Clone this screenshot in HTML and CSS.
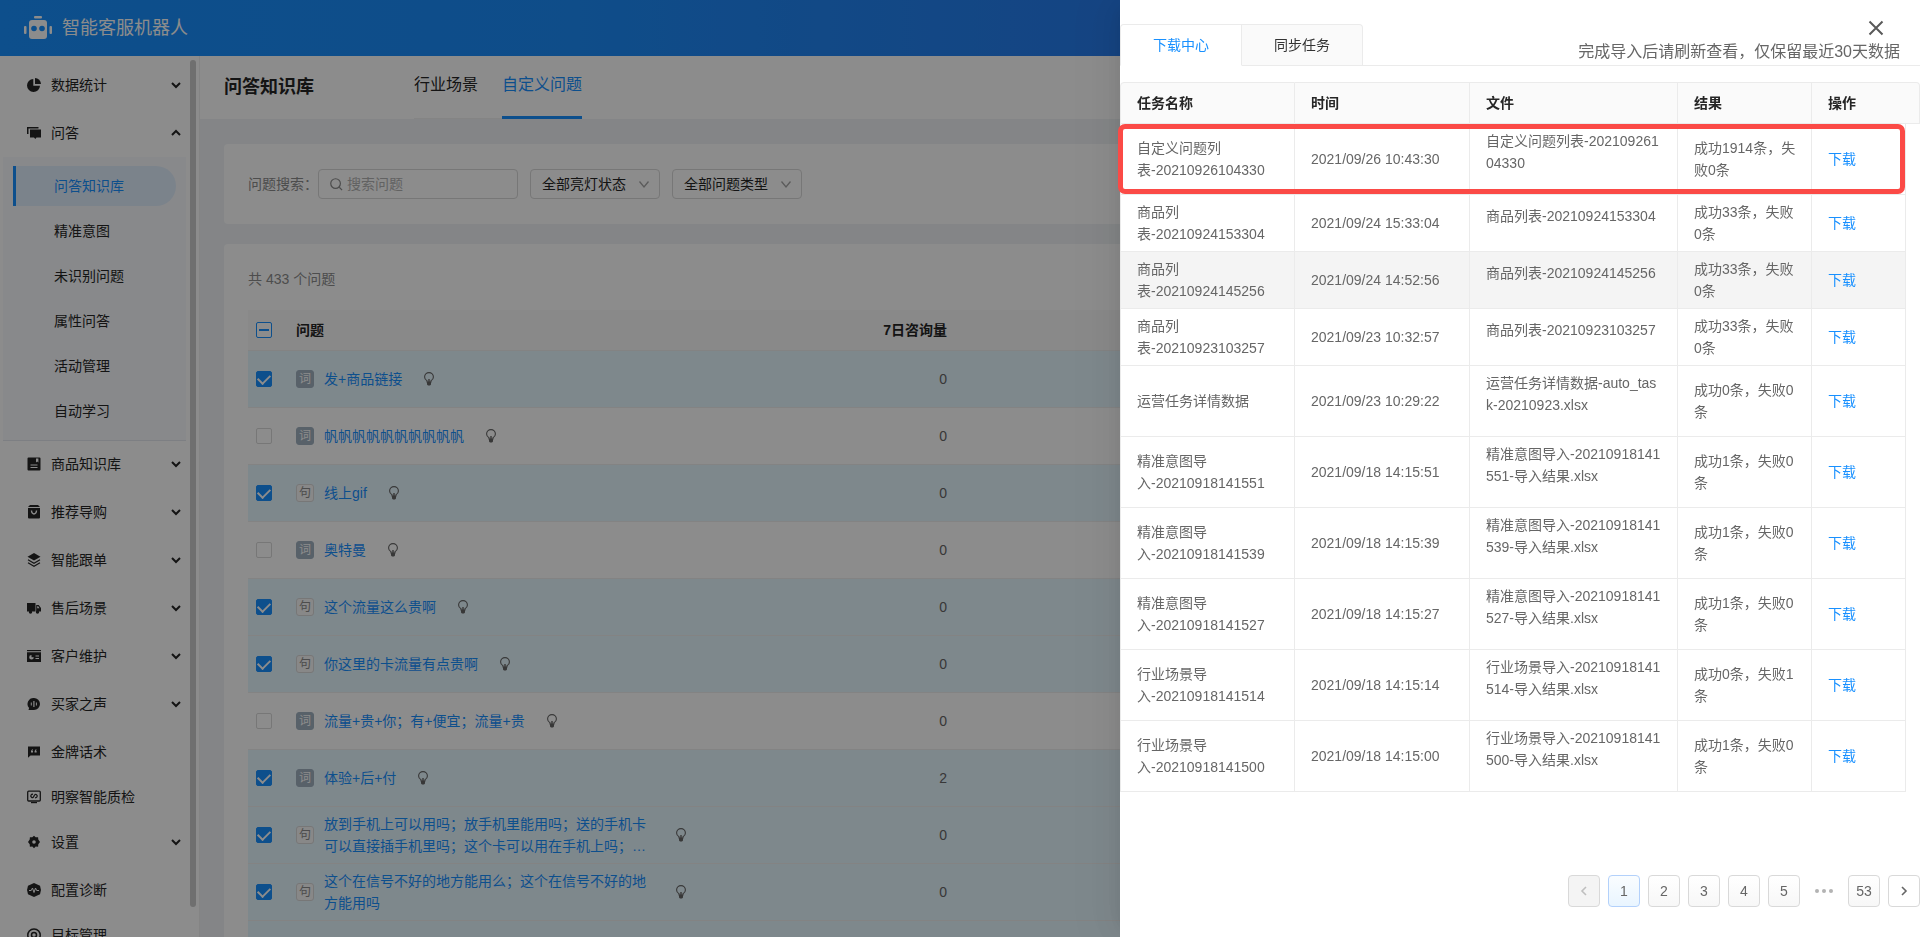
FILE: index.html
```html
<!DOCTYPE html>
<html lang="zh-CN">
<head>
<meta charset="utf-8">
<title>智能客服机器人</title>
<link rel="stylesheet" href="styles.css">
</head>
<body>
<svg class="sprite" aria-hidden="true">
  <symbol id="chevron" viewBox="0 0 10 8"><path d="M1 2l4 4 4-4" fill="none" stroke="currentColor" stroke-width="2"/></symbol>
  <symbol id="bulb" viewBox="0 0 12 14"><path d="M4 10V8.800C2.500 8 1.600 6.700 1.600 5a4.400 4.400 0 0 1 8.800 0c0 1.700-.9 3-2.400 3.800V10z" fill="none" stroke="currentColor" stroke-width="1.100"/><path d="M4 10h4v2.500L7 13.500H5L4 12.500zM5.300 7h1.400v3H5.300z" fill="currentColor"/></symbol>
</svg>

<div class="app">
  <header class="topbar">
    <svg class="logo" viewBox="0 0 28 24" aria-hidden="true"><rect x="10" y="0" width="8" height="2.500" rx="1" fill="#fff"/><rect x="5" y="4" width="18" height="19" rx="3" fill="#fff"/><rect x="0" y="10" width="2.500" height="8" rx="1" fill="#fff"/><rect x="25.500" y="10" width="2.500" height="8" rx="1" fill="#fff"/><circle cx="10" cy="12.500" r="2.800" fill="#1890ff"/><circle cx="18" cy="12.500" r="2.800" fill="#1890ff"/></svg>
    <span class="brand">智能客服机器人</span>
  </header>

  <aside class="sidebar">
    <nav class="menu">
      <a class="item fold" href="#"><svg class="ico" viewBox="0 0 14 14"><path d="M6.300 1v6.700H13A6.500 6.500 0 1 1 6.300 1z"/><path d="M8 0a6.200 6.200 0 0 1 6 6H8z"/></svg><span>数据统计</span><svg class="arrow"><use href="#chevron"/></svg></a>
      <a class="item fold open" href="#"><svg class="ico" viewBox="0 0 14 14"><path d="M0 1h11.500v1.500H1.500V8H0z"/><path d="M3 3.500h11v8H9.500L8.300 13 7 11.500H3z"/></svg><span>问答</span><svg class="arrow"><use href="#chevron"/></svg></a>
      <div class="submenu">
        <a class="sub active" href="#">问答知识库</a>
        <a class="sub" href="#">精准意图</a>
        <a class="sub" href="#">未识别问题</a>
        <a class="sub" href="#">属性问答</a>
        <a class="sub" href="#">活动管理</a>
        <a class="sub" href="#">自动学习</a>
      </div>
      <a class="item fold" href="#"><svg class="ico" viewBox="0 0 14 14"><path fill-rule="evenodd" d="M1.500.5h11a1 1 0 0 1 1 1v11a1 1 0 0 1-1 1h-11a1 1 0 0 1-1-1v-11a1 1 0 0 1 1-1zM9 1.500v4l1.200-1 1.200 1v-4zM3.500 7.500v1h7v-1zm0 2.500v1h7v-1z"/></svg><span>商品知识库</span><svg class="arrow"><use href="#chevron"/></svg></a>
      <a class="item fold" href="#"><svg class="ico" viewBox="0 0 14 14"><path d="M3 0h8l2 2H1z"/><path fill-rule="evenodd" d="M1 3h12v9.500a1 1 0 0 1-1 1H2a1 1 0 0 1-1-1zm2.800 2.500c0 5.500 6.400 5.500 6.400 0H8.800c0 3.500-3.600 3.500-3.600 0z"/></svg><span>推荐导购</span><svg class="arrow"><use href="#chevron"/></svg></a>
      <a class="item fold" href="#"><svg class="ico" viewBox="0 0 14 14"><path d="M7 0l6.500 3.700L7 7.400.5 3.700z"/><path d="M1 6.800l6 3.400 6-3.400M1 9.800l6 3.400 6-3.400" fill="none" stroke="currentColor" stroke-width="1.200"/></svg><span>智能跟单</span><svg class="arrow"><use href="#chevron"/></svg></a>
      <a class="item fold" href="#"><svg class="ico" viewBox="0 0 14 14"><path d="M0 2h8.500v8.500H0z"/><path fill-rule="evenodd" d="M9.200 4h2.500L14 7v3.500H9.200zm1 1.200v2h2.300l-1.300-2z"/><circle cx="3.500" cy="11" r="1.700"/><circle cx="10.500" cy="11" r="1.700"/></svg><span>售后场景</span><svg class="arrow"><use href="#chevron"/></svg></a>
      <a class="item fold" href="#"><svg class="ico" viewBox="0 0 14 14"><path d="M0 1h14v1.200H0z"/><path fill-rule="evenodd" d="M0 3.200h14V13H0zM4.500 6a2.300 2.300 0 1 0 2.300 2.300H4.500zm4 .5v1h3.500v-1zm0 2.500v1h3.500V9z"/></svg><span>客户维护</span><svg class="arrow"><use href="#chevron"/></svg></a>
      <a class="item fold" href="#"><svg class="ico" viewBox="0 0 14 14"><path fill-rule="evenodd" d="M7 1a6 6 0 1 1 0 12H1.500l.6-2A6 6 0 0 1 7 1zM3.800 5.500v3h1v-3zm2.500-1.500v6h1.200V4zm2.600 1.500v3h1v-3z"/></svg><span>买家之声</span><svg class="arrow"><use href="#chevron"/></svg></a>
      <a class="item" href="#"><svg class="ico" viewBox="0 0 14 14"><path fill-rule="evenodd" d="M1 1.500h12v9H3.500L1 12.800zM4 7.500h2V5.800h-.8L6 4.300h-.8L4 6zm3.600 0h2V5.800h-.8l.8-1.500h-.8L7.600 6z"/></svg><span>金牌话术</span></a>
      <a class="item" href="#"><svg class="ico" viewBox="0 0 14 14"><rect x=".7" y="1.200" width="12.600" height="9.800" rx="1" fill="none" stroke="currentColor" stroke-width="1.300"/><path d="M6 4.200C4 4.200 3 6 4.500 7.200c1 .9 1.900.4 2.500-1.200s1.500-2 2.500-1.200C11 6 10 7.800 8 7.800" fill="none" stroke="currentColor" stroke-width="1.200"/><path d="M4 12h6v1.200H4z"/></svg><span>明察智能质检</span></a>
      <a class="item fold" href="#"><svg class="ico" viewBox="0 0 14 14"><path fill-rule="evenodd" d="M7 .8l1.700 1.500 2.400-.1.200 2.300L13 7l-1.700 2.300-.2 2.400-2.400-.1L7 13.200l-1.700-1.600-2.400.1-.2-2.400L1 7l1.700-2.500.2-2.300 2.400.1zM7 5.200a1.800 1.800 0 1 0 0 3.600 1.800 1.800 0 0 0 0-3.600z"/></svg><span>设置</span><svg class="arrow"><use href="#chevron"/></svg></a>
      <a class="item" href="#"><svg class="ico" viewBox="0 0 14 14"><path d="M7 0l6 2.800L14 7l-1 4.200L7 14l-6-2.800L0 7l1-4.200z"/><path d="M2 7.500h2.200L5.500 5 7 9.500 8.500 5l1.200 2.500H12" fill="none" stroke="#fff"/></svg><span>配置诊断</span></a>
      <a class="item" href="#"><svg class="ico line" viewBox="0 0 14 14"><path d="M3.500 12.300a6.200 6.200 0 1 1 7 0"/><circle cx="7" cy="7" r="2.500"/><path d="M4.500 13.200h5"/></svg><span>目标管理</span></a>
    </nav>
    <div class="thumb"></div>
  </aside>

  <main class="content">
    <div class="page-head">
      <h1>问答知识库</h1>
      <nav class="page-tabs"><a href="#">行业场景</a><a class="on" href="#">自定义问题</a></nav>
    </div>
    <form class="card filters">
      <label for="q">问题搜索：</label>
      <div class="field search"><svg viewBox="0 0 14 14"><circle cx="6" cy="6" r="5.200"/><path d="M10 10l3 3"/></svg><input id="q" type="text" placeholder="搜索问题"></div>
      <div class="field pick"><select aria-label="亮灯状态"><option>全部亮灯状态</option></select><svg viewBox="0 0 12 12"><path d="M1.500 3.500L6 9l4.500-5.500"/></svg></div>
      <div class="field pick"><select aria-label="问题类型"><option>全部问题类型</option></select><svg viewBox="0 0 12 12"><path d="M1.500 3.500L6 9l4.500-5.500"/></svg></div>
    </form>
    <section class="card list">
      <p class="total">共 433 个问题</p>
      <table class="questions">
        <colgroup><col class="c-check"><col class="c-question"><col class="c-count"><col></colgroup>
        <thead><tr><th><input class="some" type="checkbox" aria-label="全选"></th><th>问题</th><th class="num">7日咨询量</th><th></th></tr></thead>
        <tbody>
          <tr class="sel"><td><input type="checkbox" checked aria-label="选择"></td><td><div class="q"><span class="tag word">词</span><a href="#">发+商品链接</a><svg class="bulb"><use href="#bulb"/></svg></div></td><td class="num">0</td><td></td></tr>
          <tr><td><input type="checkbox" aria-label="选择"></td><td><div class="q"><span class="tag word">词</span><a href="#">帆帆帆帆帆帆帆帆帆帆</a><svg class="bulb"><use href="#bulb"/></svg></div></td><td class="num">0</td><td></td></tr>
          <tr class="sel"><td><input type="checkbox" checked aria-label="选择"></td><td><div class="q"><span class="tag">句</span><a href="#">线上gif</a><svg class="bulb"><use href="#bulb"/></svg></div></td><td class="num">0</td><td></td></tr>
          <tr><td><input type="checkbox" aria-label="选择"></td><td><div class="q"><span class="tag word">词</span><a href="#">奥特曼</a><svg class="bulb"><use href="#bulb"/></svg></div></td><td class="num">0</td><td></td></tr>
          <tr class="sel"><td><input type="checkbox" checked aria-label="选择"></td><td><div class="q"><span class="tag">句</span><a href="#">这个流量这么贵啊</a><svg class="bulb"><use href="#bulb"/></svg></div></td><td class="num">0</td><td></td></tr>
          <tr class="sel"><td><input type="checkbox" checked aria-label="选择"></td><td><div class="q"><span class="tag">句</span><a href="#">你这里的卡流量有点贵啊</a><svg class="bulb"><use href="#bulb"/></svg></div></td><td class="num">0</td><td></td></tr>
          <tr><td><input type="checkbox" aria-label="选择"></td><td><div class="q"><span class="tag word">词</span><a href="#">流量+贵+你；有+便宜；流量+贵</a><svg class="bulb"><use href="#bulb"/></svg></div></td><td class="num">0</td><td></td></tr>
          <tr class="sel"><td><input type="checkbox" checked aria-label="选择"></td><td><div class="q"><span class="tag word">词</span><a href="#">体验+后+付</a><svg class="bulb"><use href="#bulb"/></svg></div></td><td class="num">2</td><td></td></tr>
          <tr class="sel"><td><input type="checkbox" checked aria-label="选择"></td><td><div class="q"><span class="tag">句</span><a href="#">放到手机上可以用吗；放手机里能用吗；送的手机卡可以直接插手机里吗；这个卡可以用在手机上吗；…</a><svg class="bulb"><use href="#bulb"/></svg></div></td><td class="num">0</td><td></td></tr>
          <tr class="sel"><td><input type="checkbox" checked aria-label="选择"></td><td><div class="q"><span class="tag">句</span><a href="#">这个在信号不好的地方能用么；这个在信号不好的地方能用吗</a><svg class="bulb"><use href="#bulb"/></svg></div></td><td class="num">0</td><td></td></tr>
          <tr class="sel"><td></td><td></td><td></td><td></td></tr>
        </tbody>
      </table>
    </section>
  </main>
</div>

<div class="mask"></div>

<section class="drawer" role="dialog" aria-label="下载中心">
  <button class="close" type="button" aria-label="关闭"><svg viewBox="0 0 16 16"><path d="M1.500 1.500l13 13M14.500 1.500l-13 13"/></svg></button>
  <div class="drawer-head">
    <div class="tabs" role="tablist">
      <button class="tab on" type="button" role="tab">下载中心</button>
      <button class="tab" type="button" role="tab">同步任务</button>
    </div>
    <p class="hint">完成导入后请刷新查看，仅保留最近30天数据</p>
  </div>
  <div class="tasks-wrap">
    <table class="tasks">
      <colgroup><col class="t-name"><col class="t-time"><col><col class="t-result"><col class="t-action"><col class="t-gutter"></colgroup>
      <thead><tr><th>任务名称</th><th>时间</th><th>文件</th><th>结果</th><th colspan="2">操作</th></tr></thead>
      <tbody>
        <tr><td>自定义问题列表-20210926104330</td><td>2021/09/26 10:43:30</td><td class="file"><p>自定义问题列表-20210926104330</p></td><td>成功1914条，失败0条</td><td><a href="#">下载</a></td></tr>
        <tr><td>商品列表-20210924153304</td><td>2021/09/24 15:33:04</td><td class="file"><p>商品列表-20210924153304</p></td><td>成功33条，失败0条</td><td><a href="#">下载</a></td></tr>
        <tr class="hover"><td>商品列表-20210924145256</td><td>2021/09/24 14:52:56</td><td class="file"><p>商品列表-20210924145256</p></td><td>成功33条，失败0条</td><td><a href="#">下载</a></td></tr>
        <tr><td>商品列表-20210923103257</td><td>2021/09/23 10:32:57</td><td class="file"><p>商品列表-20210923103257</p></td><td>成功33条，失败0条</td><td><a href="#">下载</a></td></tr>
        <tr><td>运营任务详情数据</td><td>2021/09/23 10:29:22</td><td class="file"><p>运营任务详情数据-auto_task-20210923.xlsx</p></td><td>成功0条，失败0条</td><td><a href="#">下载</a></td></tr>
        <tr><td>精准意图导入-20210918141551</td><td>2021/09/18 14:15:51</td><td class="file"><p>精准意图导入-20210918141551-导入结果.xlsx</p></td><td>成功1条，失败0条</td><td><a href="#">下载</a></td></tr>
        <tr><td>精准意图导入-20210918141539</td><td>2021/09/18 14:15:39</td><td class="file"><p>精准意图导入-20210918141539-导入结果.xlsx</p></td><td>成功1条，失败0条</td><td><a href="#">下载</a></td></tr>
        <tr><td>精准意图导入-20210918141527</td><td>2021/09/18 14:15:27</td><td class="file"><p>精准意图导入-20210918141527-导入结果.xlsx</p></td><td>成功1条，失败0条</td><td><a href="#">下载</a></td></tr>
        <tr><td>行业场景导入-20210918141514</td><td>2021/09/18 14:15:14</td><td class="file"><p>行业场景导入-20210918141514-导入结果.xlsx</p></td><td>成功0条，失败1条</td><td><a href="#">下载</a></td></tr>
        <tr><td>行业场景导入-20210918141500</td><td>2021/09/18 14:15:00</td><td class="file"><p>行业场景导入-20210918141500-导入结果.xlsx</p></td><td>成功1条，失败0条</td><td><a href="#">下载</a></td></tr>
      </tbody>
    </table>
    <div class="highlight"></div>
  </div>
  <nav class="pager" aria-label="分页">
    <button type="button" disabled aria-label="上一页"><svg viewBox="0 0 10 10"><path d="M7 1L3 5l4 4"/></svg></button>
    <button type="button" class="on">1</button>
    <button type="button">2</button>
    <button type="button">3</button>
    <button type="button">4</button>
    <button type="button">5</button>
    <span class="dots"><i></i><i></i><i></i></span>
    <button type="button">53</button>
    <button type="button" class="next" aria-label="下一页"><svg viewBox="0 0 10 10"><path d="M3 1l4 4-4 4"/></svg></button>
  </nav>
</section>
</body>
</html>
```

FILE: styles.css
```css
* { box-sizing: border-box; }
body {
  margin: 0;
  overflow: hidden;
  font: 14px/22px "Liberation Sans", "Noto Sans CJK SC", sans-serif;
  color: #666;
}
h1, p { margin: 0; }
a { color: #1890ff; text-decoration: none; }
button, input, select { font: inherit; color: inherit; margin: 0; }
svg { display: block; flex: none; }
.sprite { position: absolute; width: 0; height: 0; }

.app {
  display: grid;
  grid-template: 56px 1fr / 200px 1fr;
  height: 100vh;
  overflow: hidden;
}
.topbar {
  grid-column: 1 / -1;
  display: flex;
  align-items: center;
  gap: 10px;
  padding-left: 24px;
  background: linear-gradient(90deg, #1890ff, #1c8cfa 30%, #277dee 58%, #2c70e0);
}
.logo { width: 28px; height: 24px; }
.brand { font-size: 18px; color: #fff; }

.sidebar {
  position: relative;
  overflow: hidden;
  background: #fff;
  border-right: 1px solid #f0f0f0;
}
.menu { padding-top: 9px; }
.item {
  display: flex;
  align-items: center;
  gap: 10px;
  height: 40px;
  margin-bottom: 5px;
  padding: 0 18px 0 27px;
  color: #262626;
}
.item.fold { margin-bottom: 8px; }
.item.open { margin-bottom: 4px; }
.ico { width: 14px; height: 14px; fill: currentColor; }
.ico.line { fill: none; stroke: currentColor; stroke-width: 1.5; }
.arrow { width: 10px; height: 8px; margin-left: auto; }
.open .arrow { transform: rotate(180deg); }
.submenu {
  display: grid;
  gap: 5px;
  margin: 0 13px 3px 3px;
  padding: 9px 10px;
  background: #f8fafd;
  border-bottom: 1px solid #e4e8ee;
}
.sub {
  height: 40px;
  padding-left: 41px;
  line-height: 40px;
  color: #262626;
}
.sub.active {
  padding-left: 38px;
  color: #1890ff;
  background: #e1eefd;
  border-left: 3px solid #1890ff;
  border-radius: 0 20px 20px 0;
}
.thumb {
  position: absolute;
  top: 4px;
  bottom: 30px;
  right: 3px;
  width: 6px;
  border-radius: 3px;
  background: #cacaca;
}

.content { overflow: hidden; background: #f0f3f6; }
.page-head {
  display: flex;
  gap: 100px;
  height: 63px;
  padding-left: 24px;
  background: #fff;
}
h1 { font-size: 18px; line-height: 63px; color: #262626; }
.page-tabs { display: flex; font-size: 16px; line-height: 57px; }
.page-tabs a { padding: 0; color: #262626; border-bottom: 1px solid #f0f0f0; }
.page-tabs a:first-child { padding-right: 24px; }
.page-tabs .on { color: #1890ff; border-bottom: 3px solid #1890ff; }

.card { margin: 25px 24px 0; background: #fff; border-radius: 4px; }
.filters {
  display: flex;
  align-items: center;
  gap: 12px;
  height: 80px;
  padding: 0 24px;
  color: #8c8c8c;
}
.filters label { width: 58px; white-space: nowrap; }
.field {
  display: flex;
  align-items: center;
  height: 30px;
  border: 1px solid #d9d9d9;
  border-radius: 4px;
  color: #262626;
}
.field svg { fill: none; stroke: #8c8c8c; stroke-width: 1.3; }
.field input { flex: 1; min-width: 0; border: 0; padding: 0; outline: 0; background: none; }
.field input::placeholder { color: #b3b3b3; opacity: 1; }
.search { width: 200px; gap: 4px; padding: 0 11px; }
.search svg { width: 13px; height: 13px; }
.pick { width: 130px; padding: 0 9px 0 11px; }
.pick select { flex: 1; min-width: 0; padding: 0; border: 0; appearance: none; background: none; color: #262626; }
.pick svg { width: 12px; height: 12px; stroke: #a6a6a6; }

.list { margin-top: 20px; padding: 24px 24px 0; height: 100vh; }
.total { color: #8c8c8c; margin-bottom: 20px; }
table { width: 100%; table-layout: fixed; border-collapse: separate; border-spacing: 0; }
th { text-align: left; color: #262626; background: #fafafa; }
.questions th, .questions td { padding: 0 8px; border-bottom: 1px solid #efefef; }
.questions th { height: 41px; }
.questions td { height: 57px; }
.questions .num { text-align: right; }
.c-check { width: 40px; }
.c-question { width: 560px; }
.c-count { width: 107px; }
.sel td { background: #e6f7ff; }
.q { display: flex; align-items: center; }
.q a { max-width: 330px; margin: 0 21px 0 10px; }
.tag {
  flex: none;
  width: 18px;
  height: 18px;
  border: 1px solid #d9d9d9;
  border-radius: 3px;
  background: #f7f7f7;
  color: #8c8c8c;
  font-size: 12px;
  line-height: 16px;
  text-align: center;
}
.tag.word { background: #a0b1c0; border-color: #a0b1c0; color: #fff; }
.bulb { width: 12px; height: 14px; color: #666; }
input[type="checkbox"] {
  display: grid;
  place-items: center;
  width: 16px;
  height: 16px;
  appearance: none;
  border: 1px solid #d9d9d9;
  border-radius: 2px;
  background: #fff;
}
input[type="checkbox"]:checked { background: #1890ff; border-color: #1890ff; }
input[type="checkbox"]:checked::after {
  content: "";
  width: 6px;
  height: 10px;
  border: solid #fff;
  border-width: 0 2px 2px 0;
  transform: translateY(-1px) rotate(45deg);
}
input.some[type="checkbox"] { border-color: #1890ff; }
input.some::after { content: ""; width: 10px; height: 2px; background: #1890ff; }

.mask { position: fixed; inset: 0; background: rgba(0, 0, 0, .45); }

.drawer {
  position: fixed;
  top: 0;
  right: 0;
  bottom: 0;
  display: flex;
  flex-direction: column;
  width: 800px;
  padding: 24px 0 30px;
  background: #fff;
  box-shadow: -6px 0 16px -8px rgba(0, 0, 0, .08), -9px 0 28px 0 rgba(0, 0, 0, .05), -12px 0 48px 16px rgba(0, 0, 0, .03);
}
.close {
  position: absolute;
  top: 20px;
  right: 36px;
  padding: 0;
  border: 0;
  background: none;
}
.close svg { width: 16px; height: 16px; fill: none; stroke: #595959; stroke-width: 2; }
.drawer-head {
  display: flex;
  justify-content: space-between;
  height: 42px;
  margin-bottom: 16px;
  padding-right: 20px;
  border-bottom: 1px solid #ebebeb;
}
.tabs { display: flex; height: 42px; }
.tab {
  width: 121px;
  border: 1px solid #ebebeb;
  border-left-width: 0;
  border-radius: 0 4px 0 0;
  background: #fafafa;
  color: #333;
  padding: 0;
}
.tab.on { width: 122px; color: #1890ff; background: #fff; border-bottom-color: #fff; border-left-width: 1px; border-radius: 4px 0 0 0; }
.hint { margin-top: 17px; font-size: 16px; }
.tasks-wrap { position: relative; flex: 1; }
.tasks th, .tasks td {
  padding: 6px 15px 6px 16px;
  border-right: 1px solid #ebebeb;
  border-bottom: 1px solid #ebebeb;
}
.tasks th:first-child, .tasks td:first-child { border-left: 1px solid #ebebeb; }
.tasks th { height: 42px; border-top: 1px solid #ebebeb; }
.tasks th:first-child { border-radius: 4px 0 0 0; }
.tasks th:last-child { border-radius: 0 4px 0 0; }
.t-name { width: 175px; }
.t-time { width: 175px; }
.t-result { width: 134px; }
.t-action { width: 94px; }
.t-gutter { width: 14px; }
.file { word-break: break-all; }
.file p { margin-bottom: 14px; }
.hover td { background: #f4f4f4; }
.highlight {
  position: absolute;
  top: 42px;
  left: -2px;
  right: 15px;
  height: 70px;
  border: 5px solid #fb4a46;
  border-radius: 7px;
}
.pager { display: flex; justify-content: flex-end; gap: 8px; }
.pager button {
  display: grid;
  place-items: center;
  width: 32px;
  height: 32px;
  padding: 0;
  border: 1px solid #d9d9d9;
  border-radius: 4px;
  background: linear-gradient(#fff, #f7f7f7);
}
.pager .on { border-color: #b3d1fb; background: linear-gradient(#fafdff, #e9f5ff); }
.pager .next { background: #fff; }
.pager button:disabled { background: #f4f4f4; color: #bfbfbf; }
.pager svg { width: 10px; height: 10px; fill: none; stroke: currentColor; stroke-width: 1.6; }
.dots { display: flex; align-items: center; justify-content: center; gap: 3px; width: 32px; }
.dots i { width: 4px; height: 4px; border-radius: 2px; background: #b3b3b3; }
```
